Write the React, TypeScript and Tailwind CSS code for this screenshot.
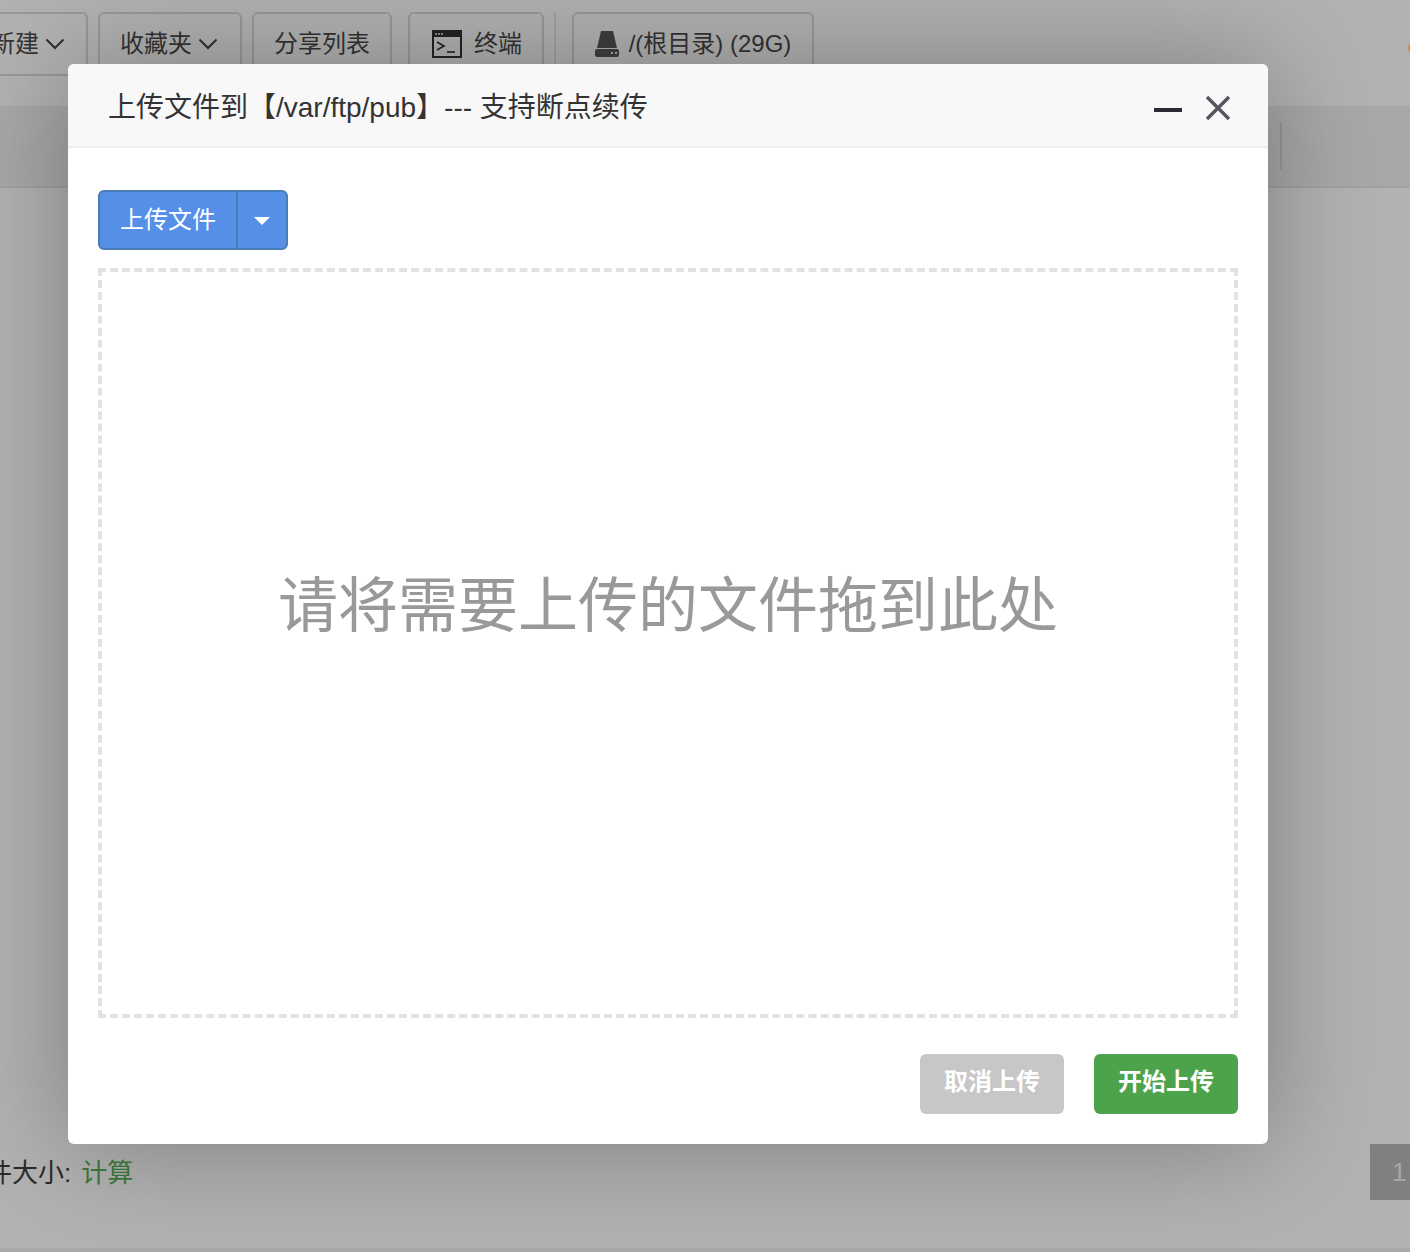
import React from "react";

const font = { fontFamily: '"Liberation Sans", "Noto Sans CJK SC", sans-serif' };

function Chevron() {
  return (
    <svg width="20" height="12" viewBox="0 0 20 12" fill="none" stroke="#2f2f2f" strokeWidth="2">
      <path d="M1.5 1.5 L10 10 L18.5 1.5" />
    </svg>
  );
}

function TermIcon() {
  return (
    <svg width="30" height="28" viewBox="0 0 30 28" fill="none">
      <rect x="1" y="1" width="28" height="26" stroke="#222" strokeWidth="2" />
      <rect x="1" y="1" width="28" height="6" fill="#222" />
      <circle cx="4" cy="4" r="1" fill="#aaa" />
      <circle cx="7" cy="4" r="1" fill="#aaa" />
      <circle cx="10" cy="4" r="1" fill="#aaa" />
      <path d="M5 12 L12 16 L5 20" stroke="#222" strokeWidth="1.6" />
      <path d="M15 22 H23" stroke="#222" strokeWidth="1.6" />
    </svg>
  );
}

function DriveIcon() {
  return (
    <svg width="24" height="26" viewBox="0 0 24 26">
      <path d="M6 0 H18 L22 17 H2 Z" fill="#3f3f3f" />
      <rect x="0" y="18" width="24" height="8" rx="2" fill="#3f3f3f" />
      <rect x="16" y="21" width="2" height="2" fill="#aaa" />
      <rect x="20" y="21" width="2" height="2" fill="#aaa" />
    </svg>
  );
}

function ToolBtn({ className, children }: { className: string; children: React.ReactNode }) {
  return (
    <div className={`flex h-[64px] shrink-0 items-center justify-center rounded-md border-2 border-[#989898] text-[24px] text-[#333] ${className}`}>
      {children}
    </div>
  );
}

export default function App() {
  return (
    <div style={font} className="relative h-[1252px] w-[1410px] overflow-hidden bg-[#b2b2b2]">
      <div className="flex h-[106px] items-start gap-[10px] pt-[12px]">
        <ToolBtn className="ml-[-30px] h-[63px] w-[118px] gap-[6px] pr-[2px]">新建<Chevron /></ToolBtn>
        <ToolBtn className="w-[144px] gap-[6px] pr-[2px]">收藏夹<Chevron /></ToolBtn>
        <ToolBtn className="w-[140px]">分享列表</ToolBtn>
        <ToolBtn className="ml-[6px] w-[136px] gap-[12px] pl-[2px]"><TermIcon />终端</ToolBtn>
        <div className="mr-[6px] h-[60px] w-[2px] bg-[#a2a2a2]" />
        <ToolBtn className="w-[242px] gap-[10px]"><DriveIcon /><span>/(根目录) (29G)</span></ToolBtn>
        <div className="ml-auto mr-[-10px] mt-[30px] h-[12px] w-[12px] rounded-full bg-[#c98a3e]" />
      </div>

      <div className="flex h-[82px] items-center justify-end border-b-2 border-[#a2a2a2] bg-[#a8a8a8]">
        <div className="mr-[128px] h-[48px] w-[2px] bg-[#989898]" />
      </div>

      <div className="mt-[958px] flex items-start justify-between">
        <div className="mt-[-1px] flex items-center gap-[10px] text-[26px] leading-[56px]">
          <span className="ml-[-14px] text-[#2a2a2a]">件大小:</span>
          <span className="text-[#3c7a3c]">计算</span>
        </div>
      </div>

      <div className="absolute left-[1370px] top-[1144px] flex h-[56px] w-[52px] items-center bg-[#808080] pl-[22px] text-[26px] text-[#a6a6a6]">1</div>
      <div className="absolute bottom-0 left-0 h-[4px] w-full bg-[#a8a8a8]" />

      <div className="absolute left-[68px] top-[64px] flex h-[1080px] w-[1200px] flex-col rounded-[6px] bg-white shadow-[0_0_110px_rgba(0,0,0,0.3)]">
        <div className="flex h-[84px] shrink-0 items-center justify-between rounded-t-[6px] border-b-2 border-[#eeeeee] bg-[#f8f8f8] pl-[40px] pr-[37px]">
          <span className="mt-[6px] text-[28px] text-[#333]">上传文件到【/var/ftp/pub】--- 支持断点续传</span>
          <div className="mt-[6px] flex items-center gap-[23px]">
            <div className="mt-[4px] h-[4px] w-[28px] bg-[#2b2b38]" />
            <svg width="26" height="26" viewBox="0 0 26 26" stroke="#55555f" strokeWidth="3.4" fill="none">
              <path d="M2 2 L24 24 M24 2 L2 24" />
            </svg>
          </div>
        </div>

        <div className="flex flex-1 flex-col px-[30px] pb-[30px] pt-[42px]">
          <div className="flex h-[60px] w-[190px] rounded-[6px] border-2 border-[#4a7db5] bg-[#558fe8] text-[24px] text-white">
            <div className="flex w-[138px] items-center justify-center border-r-2 border-[#4a7db5]">上传文件</div>
            <div className="flex flex-1 items-center justify-center">
              <div className="mt-[2px] h-0 w-0 border-x-[8px] border-t-[8px] border-x-transparent border-t-white" />
            </div>
          </div>

          <div className="mt-[18px] flex h-[750px] items-center justify-center border-4 border-dashed border-[#e2e2e2] pb-[72px] text-[60px] text-[#999]">
            请将需要上传的文件拖到此处
          </div>

          <div className="mt-[36px] flex justify-end gap-[30px] text-[24px] font-bold text-white">
            <div className="flex h-[60px] w-[144px] items-center justify-center rounded-[6px] bg-[#c7c7c7] pb-[4px]">取消上传</div>
            <div className="flex h-[60px] w-[144px] items-center justify-center rounded-[6px] bg-[#4da34b] pb-[4px]">开始上传</div>
          </div>
        </div>
      </div>
    </div>
  );
}
